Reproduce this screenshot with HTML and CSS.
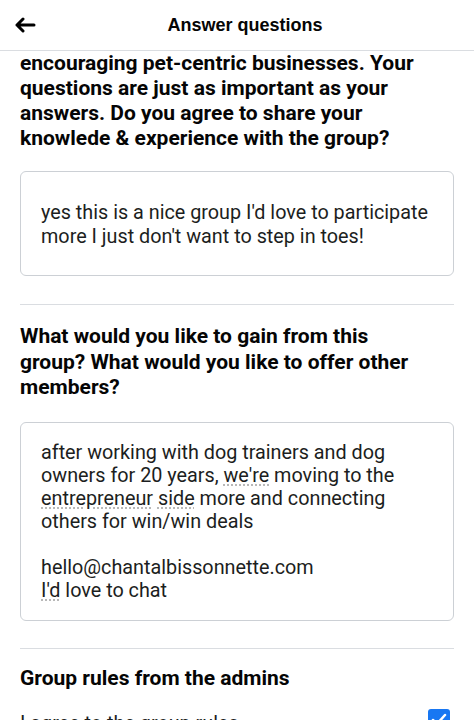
FILE: index.html
```html
<!DOCTYPE html>
<html>
<head>
<meta charset="utf-8">
<link rel="stylesheet" href="styles.css">
</head>
<body>
<div class="app">
  <header class="topbar">
    <span class="back">
      <svg width="22" height="16" viewBox="0 0 22 16"><path d="M20 8H3M9 2L3 8l6 6" fill="none" stroke="#000" stroke-width="3" stroke-linecap="round" stroke-linejoin="round"/></svg>
    </span>
    <h1 class="title">Answer questions</h1>
  </header>
  <main class="content">
    <p class="question q1">encouraging pet-centric businesses. Your questions are just as important as your answers. Do you agree to share your knowlede &amp; experience with the group?</p>
    <div class="answer a1">yes this is a nice group I'd love to participate more I just don't want to step in toes!</div>
    <hr class="divider d1">
    <p class="question q2">What would you like to gain from this group? What would you like to offer other members?</p>
    <div class="answer a2">after working with dog trainers and dog owners for 20 years, <span class="spell">we're</span> moving to the <span class="spell">entrepreneur</span> <span class="spell">side</span> more and connecting others for win/win deals<br><br>hello@chantalbissonnette.com<br><span class="spell">I'd</span> love to chat</div>
    <hr class="divider d2">
    <h2 class="section">Group rules from the admins</h2>
    <div class="agree-row">
      <span class="agree">I agree to the group rules</span>
      <span class="checkbox">
        <svg width="22" height="22" viewBox="0 0 22 22"><rect width="22" height="22" rx="3" fill="#1877f2"/><path d="M5 11l4 4 8-9" fill="none" stroke="#fff" stroke-width="2.5" stroke-linecap="round" stroke-linejoin="round"/></svg>
      </span>
    </div>
  </main>
</div>
</body>
</html>
```
FILE: styles.css
```css
html, body {
  margin: 0;
  padding: 0;
  background: #fff;
}
body {
  font-family: Roboto, "Liberation Sans", sans-serif;
  color: #1c1e21;
  overflow: hidden;
  height: 720px;
}
.topbar {
  height: 50px;
  border-bottom: 1px solid #dadde1;
  display: flex;
  align-items: center;
  justify-content: center;
  padding-left: 16px;
  position: relative;
}
.back {
  position: absolute;
  left: 14px;
  top: 17px;
  display: flex;
}
.title {
  margin: 0;
  font-family: "Liberation Sans", Arial, sans-serif;
  font-weight: 700;
  font-size: 18px;
  color: #050505;
}
.content {
  padding: 0 20px;
  display: flex;
  flex-direction: column;
}
.question {
  margin: 0;
  padding-right: 18px;
  font-weight: 700;
  font-size: 21px;
  line-height: 25px;
  color: #050505;
}
.q2 {
  margin-top: 19px;
  line-height: 25.5px;
}
.answer {
  border: 1px solid #ccd0d5;
  border-radius: 6px;
  font-size: 19.8px;
  line-height: 23px;
  color: #1c1e21;
}
.a1 {
  margin-top: 20px;
  padding: 29px 18px 26px 20px;
  line-height: 24px;
}
.a2 {
  margin-top: 21px;
  padding: 18px 20px 18px;
}
.spell {
  text-decoration: underline dotted #b8b8b8;
  text-underline-offset: 3px;
}
.divider {
  border: 0;
  border-top: 1px solid #dadde1;
  margin: 0;
}
.d1 { margin-top: 28px; }
.d2 { margin-top: 27px; }
.section {
  margin: 17px 0 0;
  font-size: 21px;
  line-height: 25px;
  font-weight: 700;
  color: #050505;
}
.agree-row {
  margin-top: 18px;
  display: flex;
  justify-content: space-between;
  align-items: flex-start;
}
.agree {
  font-size: 19.8px;
  line-height: 23px;
  padding-top: 3px;
}
.checkbox {
  display: flex;
  margin-right: 4px;
}
```
